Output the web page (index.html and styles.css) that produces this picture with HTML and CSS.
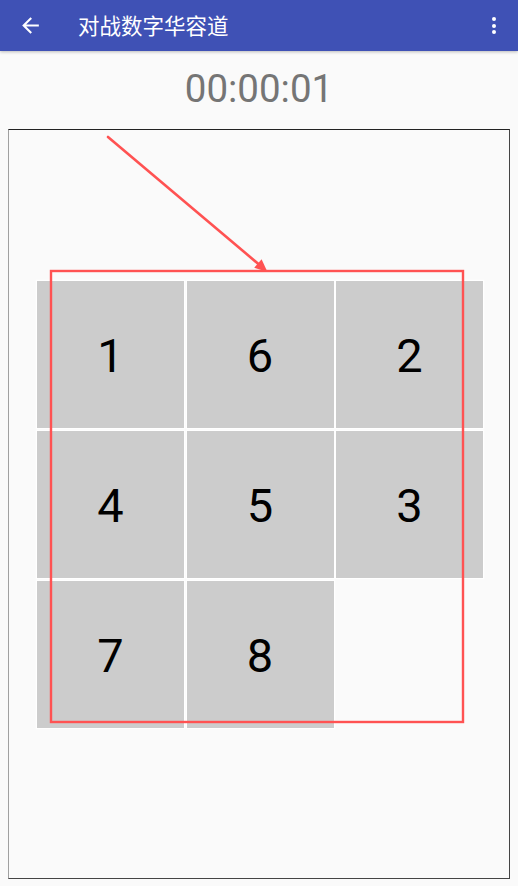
FILE: index.html
```html
<!DOCTYPE html>
<html lang="zh-CN">
<head>
<meta charset="utf-8">
<title>对战数字华容道</title>
<link rel="stylesheet" href="styles.css">
</head>
<body>
<header class="appbar">
  <button class="icon-btn back" aria-label="返回">
    <svg viewBox="0 0 24 24" width="25" height="25"><path d="M20 11H7.83l5.59-5.59L12 4l-8 8 8 8 1.41-1.41L7.83 13H20v-2z" fill="#fff"/></svg>
  </button>
  <h1 class="title">对战数字华容道</h1>
  <button class="icon-btn more" aria-label="更多">
    <span class="dot"></span><span class="dot"></span><span class="dot"></span>
  </button>
</header>
<div class="timer">00:00:01</div>
<main class="board">
  <div class="grid">
    <div class="tile">1</div>
    <div class="tile">6</div>
    <div class="tile">2</div>
    <div class="tile">4</div>
    <div class="tile">5</div>
    <div class="tile">3</div>
    <div class="tile">7</div>
    <div class="tile">8</div>
    <div class="tile empty"></div>
  </div>
</main>
<svg class="annotation" viewBox="0 0 518 886" width="518" height="886">
  <line x1="108" y1="137" x2="262" y2="267" stroke="#ff5252" stroke-width="2.6" stroke-linecap="round"/>
  <polygon points="267.5,272 254.2,267.8 261.6,259.2" fill="#ff5252"/>
  <rect x="51" y="271" width="412" height="451" fill="none" stroke="#ff5252" stroke-width="2.4"/>
</svg>
</body>
</html>
```
FILE: styles.css
```css
* { box-sizing: border-box; }
html, body {
  margin: 0;
  padding: 0;
  background: #fafafa;
}
body {
  width: 518px;
  height: 886px;
  position: relative;
  overflow: hidden;
  font-family: Roboto, "Noto Sans", "Noto Sans CJK SC", sans-serif;
}
.appbar {
  height: 51px;
  background: #3f51b5;
  display: flex;
  align-items: center;
  box-shadow: 0 1px 3px rgba(0,0,0,0.25);
  position: relative;
  z-index: 1;
}
.icon-btn {
  background: none;
  border: 0;
  padding: 0;
  margin: 0;
  display: flex;
  align-items: center;
  justify-content: center;
}
.back {
  width: 25px;
  height: 25px;
  margin-left: 18px;
}
.back svg { display: block; }
.title {
  margin: 0 0 0 35px;
  font-family: "Noto Sans CJK SC", sans-serif;
  font-weight: 400;
  font-size: 21.5px;
  line-height: 1;
  color: #fff;
  flex: 1;
  position: relative;
  top: -1px;
}
.more {
  flex-direction: column;
  gap: 2.5px;
  width: 20px;
  margin-right: 14px;
}
.dot {
  width: 4px;
  height: 4px;
  border-radius: 50%;
  background: #fff;
}
.timer {
  height: 78px;
  padding-bottom: 3px;
  display: flex;
  align-items: center;
  justify-content: center;
  font-size: 38.5px;
  color: #757575;
  font-family: Roboto, sans-serif;
}
.board {
  margin: 0 8px;
  height: 750px;
  border: 1px solid #444;
  border-top-color: #222;
  border-left-color: #a0a0a0;
  padding: 151px 0 0 28px;
}
.grid {
  display: grid;
  grid-template-columns: repeat(3, 147px);
  grid-auto-rows: 147px;
  column-gap: 2.5px;
  row-gap: 3px;
}
.tile {
  background: #cccccc;
  box-shadow: 0 0 0 1.3px #ffffff;
  display: flex;
  align-items: center;
  justify-content: center;
  font-size: 47px;
  color: #000;
  font-family: Roboto, sans-serif;
  padding-top: 2px;
}
.tile.empty {
  background: transparent;
  box-shadow: none;
}
.annotation {
  position: absolute;
  top: 0;
  left: 0;
  pointer-events: none;
  z-index: 2;
}
```
